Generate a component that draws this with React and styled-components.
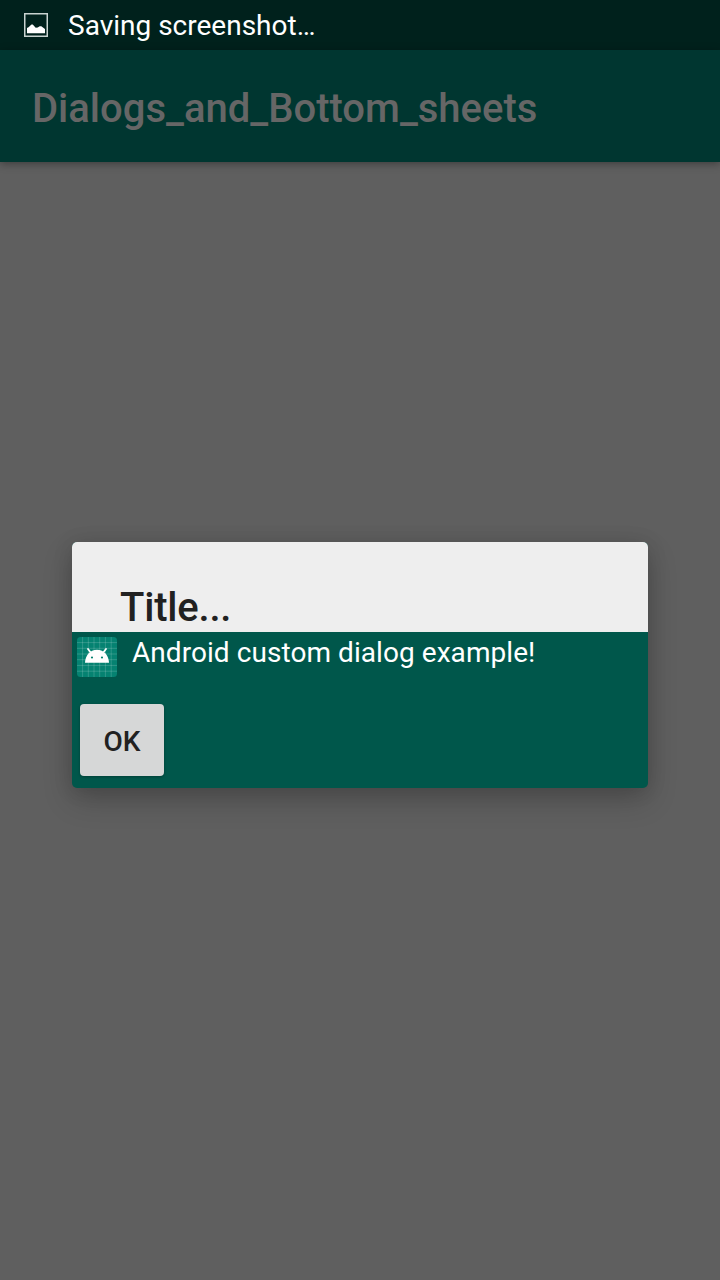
import React from "react";
import styled, { createGlobalStyle } from "styled-components";

const Global = createGlobalStyle`
  * { box-sizing: border-box; }
  body { margin: 0; font-family: Roboto, sans-serif; }
`;

const Screen = styled.div`
  width: 720px;
  height: 1280px;
  position: relative;
  display: flex;
  flex-direction: column;
  background: #5f5f5f;
  overflow: hidden;
`;

const StatusBar = styled.div`
  height: 50px;
  display: flex;
  align-items: center;
  gap: 20px;
  padding-left: 24px;
  background: #00211c;
  color: #fff;
  font-size: 28px;
`;

const StatusText = styled.span`
  line-height: 48px;
  padding-top: 2px;
`;

const AppBar = styled.header`
  height: 112px;
  display: flex;
  align-items: center;
  padding: 4px 32px 0;
  background: #003630;
  color: #666;
  font-size: 40px;
  font-weight: 500;
  box-shadow: 0 2px 8px rgba(0, 0, 0, 0.35);
`;

const Overlay = styled.div`
  position: absolute;
  inset: 50px 0 0;
  display: flex;
  align-items: center;
  justify-content: center;
`;

const Dialog = styled.section`
  width: 576px;
  height: 246px;
  border-radius: 5px;
  background: #00574b;
  box-shadow: 0 12px 30px rgba(0, 0, 0, 0.2), 0 2px 20px rgba(0, 0, 0, 0.12);
  overflow: hidden;
`;

const DialogTitle = styled.h2`
  margin: 0;
  height: 90px;
  padding: 42px 48px 0;
  background: #eee;
  color: #212121;
  font-size: 40px;
  line-height: 47px;
  font-weight: 500;
  letter-spacing: -0.2px;
`;

const MessageRow = styled.div`
  display: flex;
  gap: 15px;
  padding: 5px 5px 0;
  height: 72px;
`;

const Message = styled.span`
  color: #fff;
  font-size: 28px;
  line-height: 32px;
  letter-spacing: 0.06px;
`;

const Button = styled.button`
  display: block;
  width: 84px;
  height: 72px;
  margin-left: 8px;
  padding: 2px 0 0;
  border: 0;
  border-radius: 4px;
  background: #d6d7d7;
  color: #212121;
  font: 500 28px Roboto, sans-serif;
  box-shadow: 0 1px 3px rgba(0, 0, 0, 0.28);
`;

const PictureIcon = () => (
  <svg width="24" height="24" viewBox="0 0 24 24">
    <rect x=".75" y=".75" width="22.5" height="22.5" fill="none" stroke="#c8d3d0" strokeWidth="1.5" />
    <path d="M3 20.300v-5.300l1.500-.8 3-2.800 1.200.2 3 3.200 2-.2 2-1.300h1.600l3.700 2.700v4.300z" fill="#fff" />
  </svg>
);

const gridLines = [5.6, 11.3, 17, 22.7, 28.4, 34.2];

const LauncherIcon = () => (
  <svg width="40" height="40" viewBox="0 0 40 40">
    <rect width="40" height="40" rx="3.5" fill="#058271" />
    {gridLines.map((p) => (
      <path key={p} d={`M${p} 0v40M0 ${p}h40`} stroke="#fff" strokeOpacity=".19" strokeWidth=".9" />
    ))}
    <path d="M8 25.800C8.200 18.300 13 12.700 20 12.700S31.800 18.300 32 25.800z" fill="#fff" />
    <path d="M11 12l3.500 4.500M29 12l-3.500 4.500" stroke="#fff" strokeWidth="1.800" strokeLinecap="round" />
    <circle cx="15" cy="20.500" r="1.100" fill="#058271" />
    <circle cx="25" cy="20.500" r="1.100" fill="#058271" />
  </svg>
);

export default function App() {
  return (
    <Screen>
      <Global />
      <StatusBar>
        <PictureIcon />
        <StatusText>Saving screenshot…</StatusText>
      </StatusBar>
      <AppBar>Dialogs_and_Bottom_sheets</AppBar>
      <Overlay>
        <Dialog>
          <DialogTitle>Title...</DialogTitle>
          <MessageRow>
            <LauncherIcon />
            <Message>Android custom dialog example!</Message>
          </MessageRow>
          <Button>OK</Button>
        </Dialog>
      </Overlay>
    </Screen>
  );
}
